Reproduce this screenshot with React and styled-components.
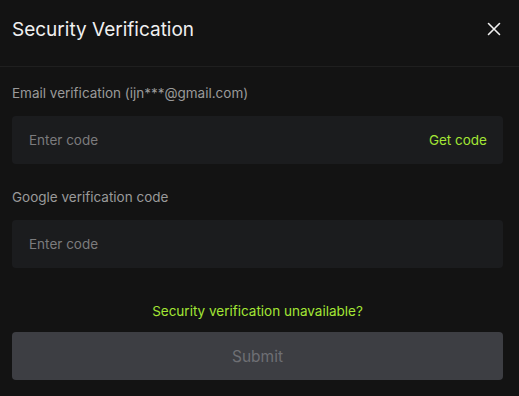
import React from "react";
import styled, { createGlobalStyle } from "styled-components";

const GlobalStyle = createGlobalStyle`
    html, body {
        margin: 0;
        padding: 0;
        background: #131313;
    }
    body {
        font-family: Inter, "Noto Sans", sans-serif;
    }
`

const Modal = styled.div`
    width: 519px;
    height: 396px;
    background: #131313;
    box-sizing: border-box;
    display: flex;
    flex-direction: column;
`

const Header = styled.header`
    height: 67px;
    display: flex;
    align-items: center;
    justify-content: space-between;
    padding: 0 18px 8px 12px;
    box-sizing: border-box;
    border-bottom: 1px solid #1f1f1f;
`

const Title = styled.h2`
    margin: 0;
    font-size: 19px;
    font-weight: 400;
    color: #f0f0f0;
    letter-spacing: 0;
`

const CloseButton = styled.button`
    background: none;
    border: 0;
    padding: 0;
    width: 14px;
    height: 14px;
    display: flex;
    cursor: pointer;
`

const Body = styled.div`
    padding: 16px 16px 0 12px;
    display: flex;
    flex-direction: column;
`

const Field = styled.div`
    display: flex;
    flex-direction: column;
    gap: 13px;
    margin-bottom: 23px;
`

const Label = styled.label`
    font-size: 13.5px;
    color: #9a9a9a;
    line-height: 20px;
`

const InputBox = styled.div`
    height: 48px;
    background: #1b1c1e;
    border-radius: 4px;
    display: flex;
    align-items: center;
    justify-content: space-between;
    padding: 0 16px 0 17px;
`

const Input = styled.input`
    flex: 1;
    background: transparent;
    border: 0;
    outline: none;
    padding: 0;
    font-family: inherit;
    font-size: 13.5px;
    color: #e0e0e0;

    &::placeholder {
        color: #7b7b7d;
    }
`

const LinkText = styled.a`
    color: #a3e635;
    font-size: 13.5px;
    text-decoration: none;
    cursor: pointer;
`

const HelpRow = styled.div`
    text-align: center;
    margin-top: 9px;
    margin-bottom: 11px;
    line-height: 20px;
`

const SubmitButton = styled.button`
    height: 48px;
    border: 0;
    border-radius: 4px;
    background: #3d3e43;
    color: #6e6f74;
    font-family: inherit;
    font-size: 15.5px;
`

const fields = [
    { label: "Email verification (ijn***@gmail.com)", action: "Get code" },
    { label: "Google verification code" },
]

const App = () => (
    <>
        <GlobalStyle />
        <Modal>
            <Header>
                <Title>Security Verification</Title>
                <CloseButton aria-label="Close">
                    <svg width="14" height="14" viewBox="0 0 14 14">
                        <path d="M1.5 1.5l11 11M12.5 1.5l-11 11" stroke="#f0f0f0" strokeWidth="1.6" strokeLinecap="round" />
                    </svg>
                </CloseButton>
            </Header>
            <Body>
                {fields.map((f) => (
                    <Field key={f.label}>
                        <Label>{f.label}</Label>
                        <InputBox>
                            <Input placeholder="Enter code" />
                            {f.action && <LinkText>{f.action}</LinkText>}
                        </InputBox>
                    </Field>
                ))}
                <HelpRow>
                    <LinkText>Security verification unavailable?</LinkText>
                </HelpRow>
                <SubmitButton disabled>Submit</SubmitButton>
            </Body>
        </Modal>
    </>
)

export default App;
